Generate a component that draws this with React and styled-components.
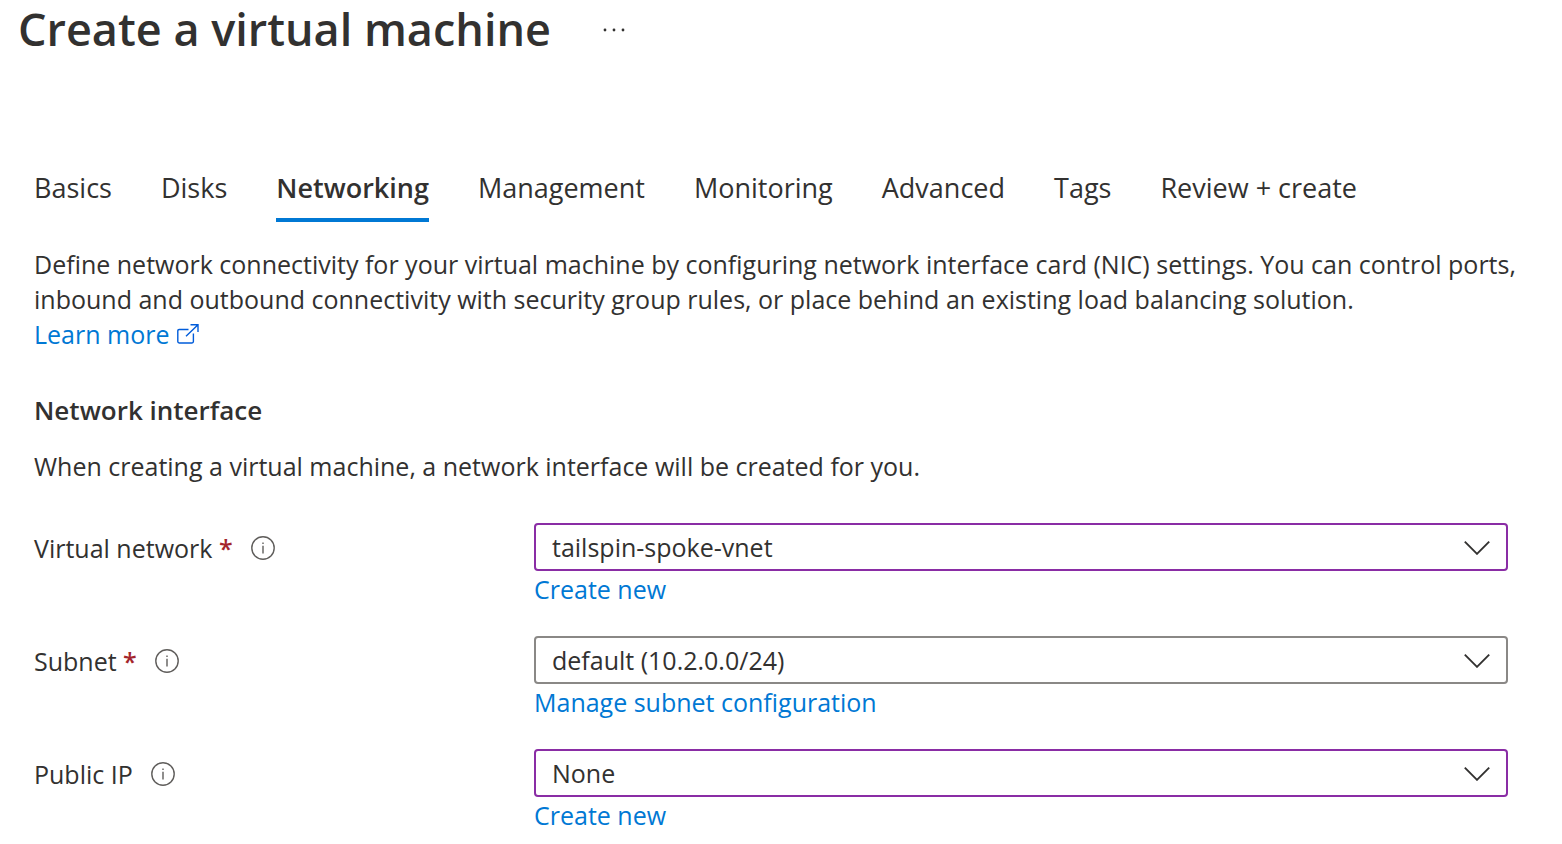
import React from "react";
import styled, { createGlobalStyle } from "styled-components";

const GlobalStyle = createGlobalStyle`
  * { box-sizing: border-box; }
  body {
    margin: 0;
    background: #fff;
    color: #323130;
    font-family: "Segoe UI", "Open Sans", "Noto Sans", sans-serif;
    font-size: 25px;
    line-height: 35px;
  }
  h1, h2, p { margin: 0; }
`;

const Page = styled.main`
  display: flex;
  flex-direction: column;
`;

const TitleBar = styled.header`
  display: flex;
  align-items: center;
  gap: 48px;
  height: 58px;
  padding: 0 18px;
`;

const Title = styled.h1`
  font-size: 45px;
  line-height: 58px;
  font-weight: 600;
`;

const MoreButton = styled.button`
  display: flex;
  padding: 0;
  border: 0;
  background: none;
  color: #323130;
  cursor: pointer;
`;

const Content = styled.div`
  display: flex;
  flex-direction: column;
  padding: 108px 34px 8px;
`;

const Tabs = styled.nav`
  display: flex;
  gap: 49px;
`;

const Tab = styled.button`
  height: 56px;
  padding: 0 0 8px;
  border: 0;
  border-bottom: 4px solid ${(p) => (p.$active ? "#0078d4" : "transparent")};
  background: none;
  color: inherit;
  font-family: inherit;
  font-size: 27px;
  line-height: 36px;
  font-weight: ${(p) => (p.$active ? 600 : 400)};
  white-space: nowrap;
  cursor: pointer;
`;

const Intro = styled.p`
  margin-top: 25px;
`;

const Link = styled.a`
  color: #0078d4;
  text-decoration: none;
`;

const LearnMore = styled(Link)`
  display: flex;
  align-items: center;
  align-self: flex-start;
  gap: 8px;
`;

const SectionTitle = styled.h2`
  margin-top: 41px;
  font-size: 26px;
  line-height: 35px;
  font-weight: 600;
`;

const SectionText = styled.p`
  margin-top: 21px;
`;

const Form = styled.form`
  display: flex;
  flex-direction: column;
  gap: 29px;
  margin-top: 39px;
  padding-right: 20px;
`;

const Field = styled.div`
  display: grid;
  grid-template-columns: 500px 1fr;
`;

const LabelCell = styled.div`
  display: flex;
  align-items: center;
  gap: 18px;
  height: 50px;
`;

const Required = styled.span`
  color: #a4262c;
  font-weight: 600;
`;

const InfoButton = styled.button`
  display: flex;
  padding: 0;
  border: 0;
  background: none;
  color: #605e5c;
  cursor: pointer;
`;

const Control = styled.div`
  display: flex;
  flex-direction: column;
  align-items: flex-start;
`;

const SelectBox = styled.div`
  display: grid;
  align-items: center;
  width: 100%;

  > * { grid-area: 1 / 1; }
  > svg {
    justify-self: end;
    margin-right: 17px;
    pointer-events: none;
  }
`;

const Select = styled.select`
  width: 100%;
  height: 48px;
  padding: 0 56px 0 16px;
  border: 2px solid ${(p) => (p.$edited ? "#8a2da5" : "#8a8886")};
  border-radius: 4px;
  appearance: none;
  background: #fff;
  color: inherit;
  font: inherit;
`;

const HelpLink = styled(Link)`
  margin-top: 1px;
`;

const tabs = ["Basics", "Disks", "Networking", "Management", "Monitoring", "Advanced", "Tags", "Review + create"];

const fields = [
  { id: "vnet", label: "Virtual network", required: true, value: "tailspin-spoke-vnet", edited: true, link: "Create new" },
  { id: "subnet", label: "Subnet", required: true, value: "default (10.2.0.0/24)", edited: false, link: "Manage subnet configuration" },
  { id: "public-ip", label: "Public IP", required: false, value: "None", edited: true, link: "Create new" },
];

const MoreIcon = () => (
  <svg width="30" height="24" viewBox="0 0 30 24" fill="currentColor" aria-hidden="true">
    <circle cx="6" cy="13" r="1.4" />
    <circle cx="15" cy="13" r="1.4" />
    <circle cx="24" cy="13" r="1.4" />
  </svg>
);

const ExternalIcon = () => (
  <svg width="22" height="22" viewBox="0 0 22 22" fill="none" stroke="#015cda" strokeWidth="1.4" aria-hidden="true">
    <path d="M11.5 5.5H2.2Q.8 5.5.8 6.9V17.6Q.8 19 2.2 19H15Q16.4 19 16.4 17.6V9.5M9 12.2 21 .8M13.5 .8H21V8" />
  </svg>
);

const InfoIcon = () => (
  <svg width="24" height="24" viewBox="0 0 24 24" fill="none" stroke="currentColor" strokeWidth="1.4" aria-hidden="true">
    <circle cx="12" cy="12" r="11.2" />
    <path d="M12 9.8V17.5M12 6.4V8" />
  </svg>
);

const ChevronIcon = () => (
  <svg width="28" height="16" viewBox="0 0 28 16" fill="none" stroke="#323130" strokeWidth="1.9" aria-hidden="true">
    <path d="M1.8 2.6 14 14.8 26.2 2.6" />
  </svg>
);

export default function App() {
  return (
    <Page>
      <GlobalStyle />
      <TitleBar>
        <Title>Create a virtual machine</Title>
        <MoreButton type="button" aria-label="More actions"><MoreIcon /></MoreButton>
      </TitleBar>
      <Content>
        <Tabs>
          {tabs.map((name) => (
            <Tab key={name} type="button" $active={name === "Networking"}>{name}</Tab>
          ))}
        </Tabs>
        <Intro>
          Define network connectivity for your virtual machine by configuring network interface card (NIC) settings. You
          can control ports, inbound and outbound connectivity with security group rules, or place behind an existing
          load balancing solution.
        </Intro>
        <LearnMore href="#learn-more">Learn more <ExternalIcon /></LearnMore>
        <SectionTitle>Network interface</SectionTitle>
        <SectionText>When creating a virtual machine, a network interface will be created for you.</SectionText>
        <Form>
          {fields.map((f) => (
            <Field key={f.id}>
              <LabelCell>
                <label htmlFor={f.id}>
                  {f.label}{f.required && <Required> *</Required>}
                </label>
                <InfoButton type="button" aria-label={`About ${f.label}`}><InfoIcon /></InfoButton>
              </LabelCell>
              <Control>
                <SelectBox>
                  <Select id={f.id} $edited={f.edited} defaultValue={f.value}>
                    <option>{f.value}</option>
                  </Select>
                  <ChevronIcon />
                </SelectBox>
                <HelpLink href={`#${f.id}`}>{f.link}</HelpLink>
              </Control>
            </Field>
          ))}
        </Form>
      </Content>
    </Page>
  );
}
